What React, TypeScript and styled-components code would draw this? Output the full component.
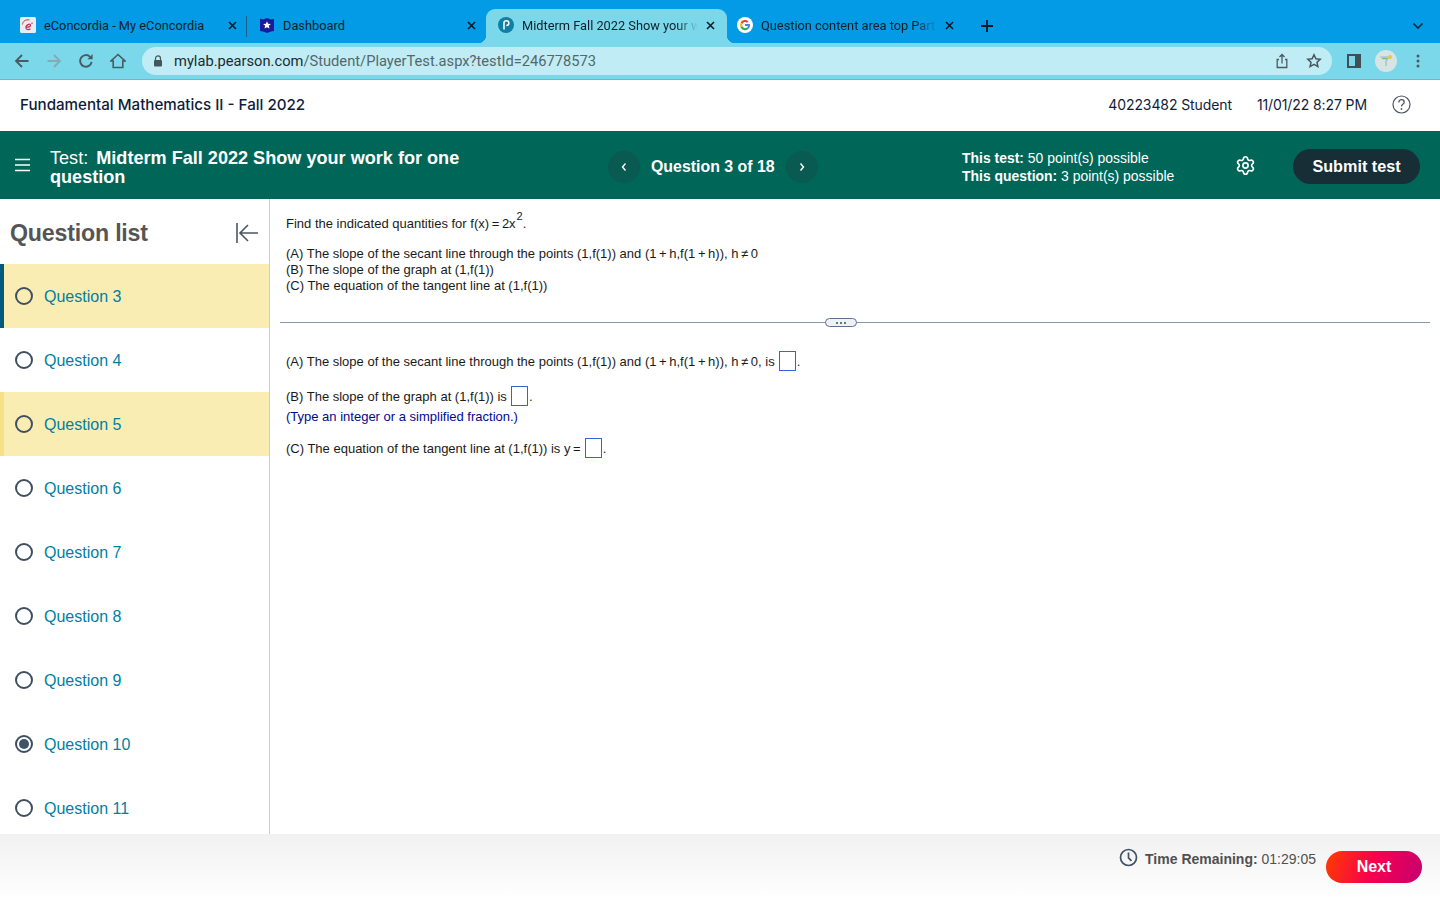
import React from "react";
import styled, { createGlobalStyle } from "styled-components";
import { Settings } from "lucide-react";

const Global = createGlobalStyle`
  html, body { margin: 0; padding: 0; height: 100%; overflow: hidden; background: #fff; }
  body { font-family: "Liberation Sans", Arial, sans-serif; }
  #root { height: 900px; }
  * { box-sizing: border-box; }
`;

const Page = styled.div`
  width: 1440px;
  height: 900px;
  display: flex;
  flex-direction: column;
  overflow: hidden;
`;

const TabStrip = styled.div`
  height: 43px;
  flex: none;
  background: #039be5;
  display: flex;
  align-items: flex-end;
  padding-left: 8px;
  padding-right: 16px;
`;

const Tab = styled.div<{ $w: number; $pl?: number; $pr?: number; $active?: boolean; $sep?: boolean }>`
  width: ${(p) => p.$w}px;
  height: 34px;
  flex: none;
  display: flex;
  align-items: center;
  position: relative;
  padding: 0 ${(p) => p.$pr ?? 11}px 2px ${(p) => p.$pl ?? 12}px;
  gap: 8px;
  border-radius: 9px 9px 0 0;
  background: ${(p) => (p.$active ? "#7bd8ea" : "transparent")};
  ${(p) =>
    p.$sep &&
    `&::after {
      content: "";
      position: absolute;
      right: 0;
      top: 7px;
      width: 1px;
      height: 21px;
      background: #1c5f86;
    }`}
  ${(p) =>
    p.$active &&
    `&::before, &::after {
      content: "";
      position: absolute;
      bottom: 0;
      width: 8px;
      height: 8px;
    }
    &::before {
      left: -8px;
      background: radial-gradient(circle at 0 0, transparent 8px, #7bd8ea 8.5px);
    }
    &::after {
      right: -8px;
      background: radial-gradient(circle at 100% 0, transparent 8px, #7bd8ea 8.5px);
    }`}
`;

const TabIcon = styled.span`
  width: 16px;
  height: 16px;
  flex: none;
  display: block;
  svg { display: block; }
`;

const TabTitle = styled.span<{ $fade?: boolean }>`
  flex: 1;
  min-width: 0;
  font-family: Roboto, sans-serif;
  font-size: 12.8px;
  color: #0c1f2c;
  white-space: nowrap;
  ${(p) =>
    p.$fade &&
    `-webkit-mask-image: linear-gradient(90deg, #000 88%, transparent 100%);
     mask-image: linear-gradient(90deg, #000 88%, transparent 100%);`}
`;

const TabClose = styled.svg`
  width: 9px;
  height: 9px;
  flex: none;
`;

const NewTab = styled.svg`
  width: 14px;
  height: 14px;
  flex: none;
  margin: 0 0 10px 13px;
`;

const StripChevron = styled.svg`
  width: 12px;
  height: 8px;
  margin: 0 0 13px auto;
  flex: none;
`;

const Toolbar = styled.div`
  height: 37px;
  flex: none;
  background: #7bd8ea;
  border-bottom: 1px solid #6bb9c6;
  display: flex;
  align-items: center;
  padding: 0 12px 1px 14px;
`;

const NavIcon = styled.svg`
  width: 16px;
  height: 16px;
  flex: none;
  margin-right: 16px;
`;

const Omnibox = styled.div`
  width: 1190px;
  height: 28px;
  border-radius: 14px;
  background: #c0edf5;
  display: flex;
  align-items: center;
  padding: 0 10px 0 11px;
`;

const Lock = styled.svg`
  width: 10px;
  height: 12px;
  flex: none;
  margin-right: 11px;
`;

const Url = styled.span`
  font-family: Roboto, sans-serif;
  font-size: 14.7px;
  color: #56666c;
  flex: 1;
  b { font-weight: 400; color: #1d2b33; }
`;

const OmniIcon = styled.svg`
  width: 16px;
  height: 16px;
  flex: none;
  margin-left: 16px;
`;

const PanelIcon = styled.span`
  width: 14px;
  height: 14px;
  flex: none;
  margin-left: 15px;
  border: 2px solid #3f4f56;
  border-right-width: 6px;
`;

const Avatar = styled.span`
  width: 22px;
  height: 22px;
  flex: none;
  margin-left: 14px;
  border-radius: 50%;
  background: #d6e4e4;
  display: flex;
  align-items: center;
  justify-content: center;
`;

const Kebab = styled.svg`
  width: 4px;
  height: 14px;
  flex: none;
  margin-left: 19px;
`;

const AppHeader = styled.header`
  height: 51px;
  flex: none;
  background: #fff;
  display: flex;
  align-items: center;
  padding: 0 29px 2px 20px;
  font-family: Inter, sans-serif;
  color: #0f1d3a;
`;

const CourseTitle = styled.span`
  flex: 1;
  font-weight: 500;
  font-size: 15.15px;
`;

const HeaderMeta = styled.span<{ $gap: number }>`
  margin-right: ${(p) => p.$gap}px;
  font-size: 14px;
  letter-spacing: -0.1px;
`;

const HelpIcon = styled.svg`
  width: 19px;
  height: 19px;
  flex: none;
`;

const TestBar = styled.div`
  height: 68px;
  flex: none;
  background: #006657;
  color: #fff;
  display: flex;
  align-items: center;
  padding: 3px 21px 0 15px;
`;

const Burger = styled.svg`
  width: 15px;
  height: 14px;
  flex: none;
  margin: 0 20px 3px 0;
`;

const TestTitle = styled.div`
  width: 558px;
  flex: none;
  margin-top: 2px;
  padding-right: 120px;
  font-size: 18.1px;
  line-height: 19px;
  font-weight: 700;
  span { display: inline-block; font-weight: 400; margin-right: 3px; }
`;

const Pager = styled.div`
  width: 354px;
  flex: none;
  display: flex;
  align-items: center;
`;

const PagerButton = styled.span`
  width: 32px;
  height: 32px;
  flex: none;
  border-radius: 50%;
  background: #095a50;
  display: flex;
  align-items: center;
  justify-content: center;
`;

const PagerLabel = styled.span`
  margin: 0 11px;
  font-weight: 700;
  font-size: 15.9px;
  white-space: nowrap;
`;

const Points = styled.div`
  width: 274px;
  flex: none;
  font-size: 13.95px;
  line-height: 18px;
  b { font-weight: 700; }
`;

const Gear = styled(Settings)`
  width: 21px;
  height: 21px;
  flex: none;
  margin: 0 37px 3px -1px;
  color: #fff;
`;

const Submit = styled.button`
  width: 127px;
  height: 35px;
  flex: none;
  margin-bottom: 1px;
  border: none;
  border-radius: 18px;
  background: #172e37;
  color: #fff;
  font-family: "Liberation Sans", sans-serif;
  font-size: 16.2px;
  font-weight: 700;
  padding: 0;
`;

const Body = styled.div`
  flex: 1;
  min-height: 0;
  display: flex;
`;

const Sidebar = styled.aside`
  width: 270px;
  flex: none;
  border-right: 1px solid #c9ccd4;
  display: flex;
  flex-direction: column;
  overflow: hidden;
`;

const SideHead = styled.div`
  height: 65px;
  flex: none;
  display: flex;
  align-items: center;
  justify-content: space-between;
  padding: 2px 10px 0;
`;

const SideTitle = styled.h2`
  margin: 0;
  padding-top: 2px;
  font-size: 23.2px;
  font-weight: 700;
  color: #555;
  letter-spacing: -0.2px;
`;

const CollapseIcon = styled.svg`
  width: 24px;
  height: 22px;
  flex: none;
`;

const QRow = styled.div<{ $mark?: boolean; $current?: boolean }>`
  height: 64px;
  flex: none;
  display: flex;
  align-items: center;
  gap: 11px;
  padding-left: ${(p) => (p.$mark ? "11px" : "15px")};
  background: ${(p) => (p.$mark ? "#faedb4" : "#fff")};
  border-left: ${(p) =>
    p.$current ? "4px solid #005a7c" : p.$mark ? "4px solid #f8e08a" : "none"};
`;

const Radio = styled.span<{ $on?: boolean }>`
  width: 18px;
  height: 18px;
  flex: none;
  border-radius: 50%;
  border: 2px solid #3f4f60;
  padding: 2px;
  &::after {
    content: "";
    display: ${(p) => (p.$on ? "block" : "none")};
    width: 100%;
    height: 100%;
    border-radius: 50%;
    background: #3f5266;
  }
`;

const QLabel = styled.span`
  padding-top: 2px;
  font-size: 16px;
  color: #007fa3;
`;

const Content = styled.main`
  flex: 1;
  min-width: 0;
  padding: 0 10px;
  font-size: 13px;
  color: #1a1a1a;
`;

const Stem = styled.div`
  padding: 17px 6px 0;
  height: 123px;
`;

const StemLine = styled.div<{ $gap?: number }>`
  line-height: 16px;
  margin-top: ${(p) => p.$gap ?? 0}px;
  white-space: nowrap;
`;

const Sup = styled.sup`
  font-size: 11px;
  line-height: 0;
  vertical-align: 8px;
  margin-left: 1px;
`;

const Divider = styled.div`
  height: 1px;
  background: #8a97ad;
  position: relative;
`;

const DividerGrip = styled.span`
  position: absolute;
  left: 545px;
  top: -4px;
  width: 32px;
  height: 9px;
  border: 1px solid #5e7290;
  border-radius: 5px;
  background: #eef2f7;
  display: flex;
  align-items: center;
  justify-content: center;
  gap: 2px;
  i {
    width: 2px;
    height: 2px;
    border-radius: 50%;
    background: #3a4a60;
    display: block;
  }
`;

const Answers = styled.div`
  padding: 28px 6px 0;
`;

const AnswerLine = styled.div<{ $top?: number }>`
  display: flex;
  align-items: center;
  height: 20px;
  margin-top: ${(p) => p.$top ?? 0}px;
  white-space: pre;
`;

const Blank = styled.span`
  width: 17px;
  height: 20px;
  border: 1px solid #3366cc;
  margin: 0 1px 0 4px;
  flex: none;
`;

const Hint = styled.div`
  color: #000a8c;
  line-height: 16px;
  margin-top: 3px;
`;

const Footer = styled.footer`
  height: 66px;
  flex: none;
  background: linear-gradient(180deg, #f1f1f1 0%, #ffffff 100%);
  display: flex;
  align-items: flex-start;
  justify-content: flex-end;
  padding: 17px 18px 0 0;
`;

const Clock = styled.svg`
  width: 19px;
  height: 19px;
  flex: none;
  margin: -3px 7px 0 0;
`;

const TimeLabel = styled.span`
  font-size: 14px;
  line-height: 18px;
  color: #505050;
  margin-top: -1px;
  b { font-weight: 700; }
`;

const NextButton = styled.button`
  width: 96px;
  height: 32px;
  flex: none;
  margin: 0 0 0 10px;
  border: none;
  border-radius: 16px;
  background: linear-gradient(105deg, #ff3a00 0%, #f5004f 50%, #c6006f 100%);
  color: #fff;
  font-family: "Liberation Sans", sans-serif;
  font-size: 16px;
  font-weight: 700;
  padding: 0;
`;

const CloseGlyph = () => (
  <TabClose viewBox="0 0 9 9">
    <path d="M1 1l7 7M8 1L1 8" stroke="#0b1720" strokeWidth="1.5" fill="none" />
  </TabClose>
);

const questions = [3, 4, 5, 6, 7, 8, 9, 10, 11];
const marked = [3, 5];

export default function App() {
  return (
    <Page>
      <Global />
      <TabStrip>
        <Tab $w={239} $pr={10} $sep>
          <TabIcon>
            <svg width="16" height="16" viewBox="0 0 16 16">
              <rect x="0" y="0" width="16" height="16" rx="1.500" fill="#e4eef4" />
              <path d="M2.500 7.500C2.800 4 6 2.200 9.500 3" stroke="#b8405c" strokeWidth="1" fill="none" />
              <circle cx="12" cy="6.300" r="0.700" fill="#c8202f" />
              <path d="M6.500 10.200c2 0 4-.7 4-2 0-.9-1-1.200-2-.8C6.800 8 5.800 9.500 6 11c.2 1.800 2.500 2 4.500 .7" stroke="#c0304f" strokeWidth="1.200" fill="none" />
            </svg>
          </TabIcon>
          <TabTitle>eConcordia - My eConcordia</TabTitle>
          <CloseGlyph />
        </Tab>
        <Tab $w={239} $pr={10}>
          <TabIcon>
            <svg width="16" height="16" viewBox="0 0 16 16">
              <path d="M1 1.500 4 2.500 8 1l4 1.500 3-1V14l-3 .5L8 16l-4-1.500L1 14z" fill="#1a1a9c" />
              <path d="M8 4.200l1.100 2.600 2.800.2-2.100 1.800.7 2.800L8 10.200l-2.500 1.400.7-2.800L4.100 7l2.800-.2z" fill="#fff" />
            </svg>
          </TabIcon>
          <TabTitle>Dashboard</TabTitle>
          <CloseGlyph />
        </Tab>
        <Tab $w={241} $pr={12} $active>
          <TabIcon>
            <svg width="16" height="16" viewBox="0 0 16 16">
              <circle cx="8" cy="8" r="8" fill="#0f7fa8" />
              <path d="M6 12.500V5.800C6 4.500 7 3.700 8.400 3.700c1.500 0 2.500 1 2.500 2.400S9.900 8.600 8.300 8.600" stroke="#fff" strokeWidth="1.500" fill="none" />
            </svg>
          </TabIcon>
          <TabTitle $fade>Midterm Fall 2022 Show your w</TabTitle>
          <CloseGlyph />
        </Tab>
        <Tab $w={240} $pl={10} $pr={13}>
          <TabIcon>
            <svg width="16" height="16" viewBox="0 0 16 16">
              <circle cx="8" cy="8" r="8" fill="#fff" />
              <path d="M3.600 5.600A5 5 0 0 1 11.500 4.400L10.100 5.800A3 3 0 0 0 5.300 6.900z" fill="#ea4335" />
              <path d="M3.600 5.600l1.700 1.300a3 3 0 0 0 0 2.200L3.600 10.400a5 5 0 0 1 0-4.800z" fill="#fbbc05" />
              <path d="M3.600 10.400l1.700-1.300A3 3 0 0 0 10 10.500l1.600 1.300a5 5 0 0 1-8-1.400z" fill="#34a853" />
              <path d="M13 8c0 1.500-.5 2.800-1.400 3.800L10 10.500c.5-.4.800-1 1-1.600H8V7h4.900c.1.300.1.600.1 1z" fill="#4285f4" />
            </svg>
          </TabIcon>
          <TabTitle $fade>Question content area top Part</TabTitle>
          <CloseGlyph />
        </Tab>
        <NewTab viewBox="0 0 14 14">
          <path d="M7 1v12M1 7h12" stroke="#0b1720" strokeWidth="1.800" fill="none" />
        </NewTab>
        <StripChevron viewBox="0 0 12 8">
          <path d="M1.500 1.500 6 6l4.500-4.500" stroke="#0e2a3a" strokeWidth="1.700" fill="none" />
        </StripChevron>
      </TabStrip>

      <Toolbar>
        <NavIcon viewBox="0 0 16 16">
          <path d="M14.500 8H2M8 2 2 8l6 6" stroke="#4a5a62" strokeWidth="1.800" fill="none" />
        </NavIcon>
        <NavIcon viewBox="0 0 16 16">
          <path d="M1.500 8H14M8 2l6 6-6 6" stroke="#86a9b4" strokeWidth="1.800" fill="none" />
        </NavIcon>
        <NavIcon viewBox="0 0 16 16">
          <path d="M13.600 8.800A5.800 5.800 0 1 1 12 3.800" stroke="#4a5a62" strokeWidth="1.900" fill="none" />
          <path d="M9.400 6.200h5.200V1z" fill="#4a5a62" />
        </NavIcon>
        <NavIcon viewBox="0 0 16 16">
          <path d="M8 1.500 1 8h2.200v6.500h9.600V8H15z" stroke="#4a5a62" strokeWidth="1.600" fill="none" />
        </NavIcon>
        <Omnibox>
          <Lock viewBox="0 0 10 12">
            <path d="M2.500 5V3.400a2.500 2.500 0 0 1 5 0V5" stroke="#45555c" strokeWidth="1.200" fill="none" />
            <rect x="1" y="5" width="8" height="6.500" rx="1" fill="#45555c" />
          </Lock>
          <Url>
            <b>mylab.pearson.com</b>/Student/PlayerTest.aspx?testId=246778573
          </Url>
          <OmniIcon viewBox="0 0 16 16">
            <path d="M8 1.500v9M5.500 4 8 1.500 10.500 4M5 6.500H3.200v8h9.600v-8H11" stroke="#4a5a62" strokeWidth="1.300" fill="none" />
          </OmniIcon>
          <OmniIcon viewBox="0 0 16 16">
            <path d="M8 1.800l1.900 4 4.300.5-3.200 3 .9 4.300L8 11.400l-3.900 2.200.9-4.300-3.200-3 4.300-.5z" stroke="#45555c" strokeWidth="1.500" fill="none" />
          </OmniIcon>
        </Omnibox>
        <PanelIcon />
        <Avatar>
          <svg width="14" height="14" viewBox="0 0 14 14">
            <path d="M1 3h9L7 7v5" stroke="#9ab8d0" strokeWidth="1.200" fill="none" />
            <path d="M3 4.500h5" stroke="#7cc06c" strokeWidth="1.400" />
            <circle cx="11" cy="3" r="2" fill="#e8c84a" />
          </svg>
        </Avatar>
        <Kebab viewBox="0 0 4 14">
          <circle cx="2" cy="2" r="1.500" fill="#4a5a62" />
          <circle cx="2" cy="7" r="1.500" fill="#4a5a62" />
          <circle cx="2" cy="12" r="1.500" fill="#4a5a62" />
        </Kebab>
      </Toolbar>

      <AppHeader>
        <CourseTitle>Fundamental Mathematics II - Fall 2022</CourseTitle>
        <HeaderMeta $gap={25}>40223482 Student</HeaderMeta>
        <HeaderMeta $gap={25}>11/01/22 8:27 PM</HeaderMeta>
        <HelpIcon viewBox="0 0 19 19">
          <circle cx="9.500" cy="9.500" r="8.500" stroke="#4c5560" strokeWidth="1.200" fill="none" />
          <path d="M6.800 7.400c0-1.700 1.200-2.700 2.700-2.700s2.700 1 2.700 2.500c0 2.200-2.700 2.100-2.700 4.300" stroke="#4c5560" strokeWidth="1.300" fill="none" />
          <circle cx="9.500" cy="14" r="0.900" fill="#4c5560" />
        </HelpIcon>
      </AppHeader>

      <TestBar>
        <Burger viewBox="0 0 15 14">
          <path d="M0 1.500h15M0 7h15M0 12.500h15" stroke="#fff" strokeWidth="1.500" />
        </Burger>
        <TestTitle>
          <span>Test:</span> Midterm Fall 2022 Show your work for one question
        </TestTitle>
        <Pager>
          <PagerButton>
            <svg width="8" height="10" viewBox="0 0 8 10">
              <path d="M5.500 1.500 2.500 5l3 3.500" stroke="#fff" strokeWidth="1.400" fill="none" />
            </svg>
          </PagerButton>
          <PagerLabel>Question 3 of 18</PagerLabel>
          <PagerButton>
            <svg width="8" height="10" viewBox="0 0 8 10">
              <path d="M2.500 1.500 5.500 5l-3 3.500" stroke="#fff" strokeWidth="1.400" fill="none" />
            </svg>
          </PagerButton>
        </Pager>
        <Points>
          <div><b>This test:</b> 50 point(s) possible</div>
          <div><b>This question:</b> 3 point(s) possible</div>
        </Points>
        <Gear strokeWidth={1.9} />
        <Submit>Submit test</Submit>
      </TestBar>

      <Body>
        <Sidebar>
          <SideHead>
            <SideTitle>Question list</SideTitle>
            <CollapseIcon viewBox="0 0 24 22">
              <path d="M2 1v20M23 11H5M13 3l-8 8 8 8" stroke="#4f5560" strokeWidth="1.600" fill="none" />
            </CollapseIcon>
          </SideHead>
          {questions.map((n) => (
            <QRow key={n} $mark={marked.includes(n)} $current={n === 3}>
              <Radio $on={n === 10} />
              <QLabel>Question {n}</QLabel>
            </QRow>
          ))}
        </Sidebar>
        <Content>
          <Stem>
            <StemLine>
              Find the indicated quantities for f(x){"\u2009"}={"\u2009"}2x<Sup>2</Sup>.
            </StemLine>
            <StemLine $gap={14}>(A) The slope of the secant line through the points (1,f(1)) and (1{"\u2009"}+{"\u2009"}h,f(1{"\u2009"}+{"\u2009"}h)), h{"\u2009"}≠{"\u2009"}0</StemLine>
            <StemLine>(B) The slope of the graph at (1,f(1))</StemLine>
            <StemLine>(C) The equation of the tangent line at (1,f(1))</StemLine>
          </Stem>
          <Divider>
            <DividerGrip>
              <i />
              <i />
              <i />
            </DividerGrip>
          </Divider>
          <Answers>
            <AnswerLine>
              (A) The slope of the secant line through the points (1,f(1)) and (1{"\u2009"}+{"\u2009"}h,f(1{"\u2009"}+{"\u2009"}h)), h{"\u2009"}≠{"\u2009"}0, is
              <Blank />.
            </AnswerLine>
            <AnswerLine $top={15}>
              (B) The slope of the graph at (1,f(1)) is
              <Blank />.
            </AnswerLine>
            <Hint>(Type an integer or a simplified fraction.)</Hint>
            <AnswerLine $top={13}>
              (C) The equation of the tangent line at (1,f(1)) is y{"\u2009"}=
              <Blank />.
            </AnswerLine>
          </Answers>
        </Content>
      </Body>

      <Footer>
        <Clock viewBox="0 0 19 19">
          <circle cx="9.500" cy="9.500" r="8" stroke="#3f5266" strokeWidth="1.700" fill="none" />
          <path d="M9.500 4.500v5.300l3 3" stroke="#3f5266" strokeWidth="1.700" fill="none" />
        </Clock>
        <TimeLabel>
          <b>Time Remaining:</b> 01:29:05
        </TimeLabel>
        <NextButton>Next</NextButton>
      </Footer>
    </Page>
  );
}
